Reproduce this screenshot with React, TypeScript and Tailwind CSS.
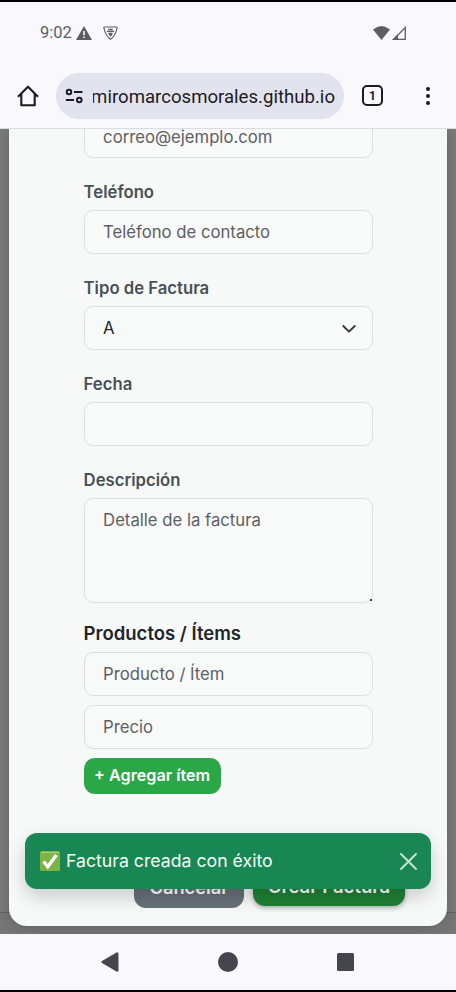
import type { ReactNode } from 'react';

const inputBox =
  'flex h-[44px] w-full shrink-0 items-center rounded-[9px] border border-[#dcdfe1] bg-[#f8f9f9] pl-[18.5px] pr-[19px] pt-[1px] text-[16.7px] text-[#5d6063]';

function Label({ children }: { children: ReactNode }) {
  return (
    <div className="flex h-[52px] shrink-0 items-end pb-[6px] text-[16.7px] font-semibold leading-[24px] text-[#495057]">
      <span>{children}</span>
    </div>
  );
}

function StatusBar() {
  return (
    <div className="flex h-[62px] items-center justify-between pl-[40px] pr-[50px] text-[#5e5e62]">
      <div className="flex items-center">
        <span className="w-[36px] whitespace-nowrap text-[16.5px] leading-[20px]">9:02</span>
        <svg className="h-[14px] w-[16px]" viewBox="0 0 16 14">
          <path d="M8 0 16 14H0Z" fill="currentColor" />
          <path d="M7.2 5h1.6v4.3H7.2zM7.2 10.5h1.6v1.6H7.2z" fill="#f8f8fd" />
        </svg>
        <svg className="ml-[10.5px] h-[14px] w-[15px]" viewBox="0 0 15 14" fill="none">
          <path d="M1.5 1h12q.9 0 .6 1Q12.4 10 7.5 13.2 2.6 10 .9 2 .6 1 1.5 1Z" stroke="currentColor" strokeWidth="1.2" />
          <path d="M5.3 2.8h4.4v1.4H5.3zM3.6 4.8h7.8l-.5 1.2H4.1zM5.2 6.8h4.6Q9.3 9.500 7.500 10.800 5.700 9.500 5.200 6.800Z" fill="currentColor" />
        </svg>
      </div>
      <div className="flex items-center gap-[2px]">
        <svg className="h-[14px] w-[17px]" viewBox="0 0 17 14">
          <path d="M0 3.600Q8.500-3.400 17 3.600L8.500 14Z" fill="currentColor" />
        </svg>
        <svg className="h-[14px] w-[14px]" viewBox="0 0 14 14">
          <path d="M13.300 1.500v11.800H1.700Z" fill="none" stroke="currentColor" strokeWidth="1.300" />
          <path d="M0 14 6 8v6Z" fill="currentColor" />
        </svg>
      </div>
    </div>
  );
}

function Toolbar() {
  return (
    <div className="flex h-[65px] items-center pb-0.5 text-[#1b1b21]">
      <svg className="ml-[17px] h-[22px] w-[22px]" viewBox="0 0 22 22" fill="none" stroke="currentColor" strokeWidth="2.100">
        <path d="M1 11.800 11 1.700l10 10.100M4.300 9v11.200h13.400V9" strokeLinejoin="round" />
      </svg>
      <div className="ml-[17px] flex h-[46px] w-[288px] items-center rounded-full bg-[#e3e3ef] pl-[9px]">
        <svg className="h-[16px] w-[18px] shrink-0" viewBox="0 0 18 16" fill="none" stroke="currentColor" strokeWidth="1.900">
          <circle cx="4" cy="4" r="2.300" />
          <path d="M9 4h8.500M.8 12H9" />
          <circle cx="14.300" cy="12" r="2.300" />
        </svg>
        <div className="ml-[10px] flex w-[242px] justify-end overflow-hidden whitespace-nowrap pt-[2px] text-[18.6px] leading-[26px]">
          <span>miromarcosmorales.github.io</span>
        </div>
      </div>
      <div className="ml-[18px] flex h-[21px] w-[21px] items-center justify-center rounded-[5px] border-2 border-current text-[12px] font-bold leading-none">
        1
      </div>
      <div className="ml-[43px] flex flex-col gap-[3px]">
        <i className="h-[4px] w-[4px] rounded-full bg-current" />
        <i className="h-[4px] w-[4px] rounded-full bg-current" />
        <i className="h-[4px] w-[4px] rounded-full bg-current" />
      </div>
    </div>
  );
}

function InvoiceForm() {
  return (
    <div className="mx-[9px] flex h-[797px] flex-col rounded-b-[18px] bg-[#f7f9f9] pl-[74.600px] pr-[74px] shadow-[0_0_14px_rgba(0,0,0,0.22)]">
      <div className={inputBox + ' -mt-[15px]'}>
        <span className="leading-[14px]">correo@ejemplo.com</span>
      </div>
      <Label>Teléfono</Label>
      <div className={inputBox}>Teléfono de contacto</div>
      <Label>Tipo de Factura</Label>
      <div className={inputBox + ' justify-between'}>
        <span className="text-[#212529]">A</span>
        <svg className="-mr-[3px] h-[8px] w-[14px]" viewBox="0 0 14 8" fill="none" stroke="#343a40" strokeWidth="1.900" strokeLinecap="round" strokeLinejoin="round">
          <path d="m1.300 1 5.700 5.700L12.700 1" />
        </svg>
      </div>
      <Label>Fecha</Label>
      <div className={inputBox} />
      <Label>Descripción</Label>
      <div className="flex h-[105px] shrink-0 justify-between rounded-[9px] border border-[#dcdfe1] bg-[#f8f9f9] pl-[18.500px] text-[16.7px] text-[#5d6063]">
        <span className="pt-[9px] leading-[24px]">Detalle de la factura</span>
        <i className="mb-[1px] h-[2px] w-[2px] self-end bg-[#444]" />
      </div>
      <h2 className="mt-[17px] h-[32.400px] shrink-0 text-[18.500px] font-semibold leading-[26px] text-[#212529]">Productos / Ítems</h2>
      <div className={inputBox}>Producto / Ítem</div>
      <div className={inputBox + ' mt-[9px]'}>Precio</div>
      <button className="mt-[8.500px] flex h-[36px] w-[137px] shrink-0 items-center justify-center whitespace-nowrap rounded-[11px] bg-[#2aa746] pb-[1px] text-[16.2px] font-semibold text-white">
        + Agregar ítem
      </button>
      <div className="-mr-[32px] mt-[68px] flex items-start justify-end gap-[9px]">
        <button className="h-[46px] w-[110px] rounded-[12px] bg-[#687078] text-[18.300px] font-semibold leading-[50px] text-white">
          <span>Cancelar</span>
        </button>
        <button className="h-[44px] w-[152px] whitespace-nowrap rounded-[12px] bg-[#208035] text-[18.600px] font-semibold leading-[48px] text-white shadow-[0_2px_5px_rgba(0,0,0,0.3)]">
          Crear Factura
        </button>
      </div>
    </div>
  );
}

function Toast() {
  return (
    <div className="absolute left-[25px] top-[704px] flex h-[56px] w-[406px] items-center rounded-[12px] bg-[#198754] pl-[15px] pr-[14px] text-white shadow-[0_8px_18px_rgba(0,0,0,0.18)]">
      <svg className="h-[20px] w-[20px]" viewBox="0 0 20 20">
        <rect width="20" height="20" rx="1.500" fill="#7cb342" />
        <path d="M1.500 1.500h17" stroke="#aed581" strokeWidth="1" />
        <path d="m3.600 10.500 4.200 5.200L16.300 4" fill="none" stroke="#fff" strokeWidth="3.300" />
      </svg>
      <span className="ml-[6px] flex-1 text-[17.700px] leading-[24px] text-[#f1fff8]">Factura creada con éxito</span>
      <svg className="h-[17px] w-[17px]" viewBox="0 0 17 17" fill="none" stroke="#c8e5d6" strokeWidth="1.900" strokeLinecap="round">
        <path d="m1 1 15 15M16 1 1 16" />
      </svg>
    </div>
  );
}

function NavigationBar() {
  return (
    <div className="flex h-[56px] items-center bg-[#f8f8fd] pl-[101px] text-[#45454d]">
      <svg className="h-[20px] w-[18px]" viewBox="0 0 18 20">
        <path d="M1 9 15.500.5Q17.500-.3 17.500 2v16q0 2.300-2 1.500L1 11Q-.4 10 1 9Z" fill="currentColor" />
      </svg>
      <i className="ml-[99px] h-[20px] w-[20px] rounded-full bg-current" />
      <i className="ml-[99px] h-[18px] w-[17px] rounded-[1.500px] bg-current" />
    </div>
  );
}

export default function App() {
  return (
    <div className="flex h-[992px] w-[456px] flex-col overflow-hidden border-y-2 border-black bg-[#f8f8fd] font-['Inter',sans-serif]">
      <header className="h-[127px] shrink-0 border-b border-[#dcdce6] font-['Roboto',sans-serif]">
        <StatusBar />
        <Toolbar />
      </header>
      <main className="relative h-[805px] shrink-0 overflow-hidden bg-[linear-gradient(#7b7b7b_783px,#656565_783px,#656565_784px,#767676_784px)]">
        <InvoiceForm />
        <Toast />
      </main>
      <NavigationBar />
    </div>
  );
}
